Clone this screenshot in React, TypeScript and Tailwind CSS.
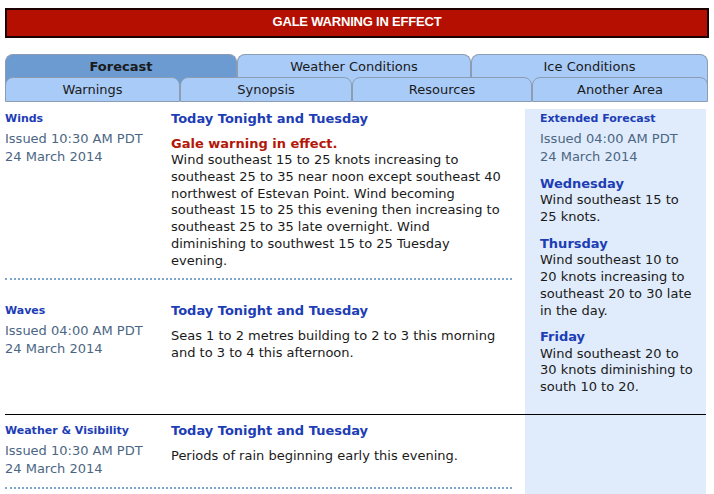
import React from "react";

const tabBorder = "border border-[#8c9db3]";

function IssuedBlock({ label, issued }: { label: string; issued: string }) {
  return (
    <div className="w-[166px] shrink-0">
      <div className="text-[11px] font-bold leading-[14px] text-[#1d3db5]">{label}</div>
      <div className="mt-[4px] text-[13px] leading-[18px] text-[#4b6684]">
        {issued}
        <br />
        24 March 2014
      </div>
    </div>
  );
}

function Heading() {
  return (
    <div className="text-[13px] font-bold leading-[14px] text-[#1d3db5] whitespace-nowrap">
      Today Tonight and Tuesday
    </div>
  );
}

export default function App() {
  return (
    <div className="w-[714px] h-[494px] overflow-hidden bg-white px-[5px] font-['DejaVu_Sans',Verdana,sans-serif]">
      {/* Banner */}
      <div className="mt-[8px] h-[30px] w-[704px] border-2 border-[#1a0000] bg-[#b40f00] flex items-center justify-center pb-[3px]">
        <span className="font-['Liberation_Sans',Arial,sans-serif] text-[13px] font-bold tracking-[-0.2px] text-white">
          GALE WARNING IN EFFECT
        </span>
      </div>

      {/* Tabs */}
      <div className="mt-[16px] w-[703px]">
        <div className="flex">
          <div className={`w-[232px] h-[31px] pt-[2px] pb-[8px] rounded-t-[8px] ${tabBorder} border-b-0 bg-[#6b9bd0] flex items-center justify-center text-[13px] font-bold text-[#1a1a1a]`}>
            Forecast
          </div>
          <div className={`w-[234px] h-[31px] pt-[2px] pb-[8px] rounded-t-[8px] ${tabBorder} border-b-0 bg-[#a9cbf8] flex items-center justify-center text-[13px] text-[#1a1a1a]`}>
            Weather Conditions
          </div>
          <div className={`w-[237px] h-[31px] pt-[2px] pb-[8px] rounded-t-[8px] ${tabBorder} border-b-0 bg-[#a9cbf8] flex items-center justify-center text-[13px] text-[#1a1a1a]`}>
            Ice Conditions
          </div>
        </div>
        <div className="relative -mt-[8px] flex">
          <div className={`w-[175px] h-[25px] pt-[1px] rounded-t-[8px] ${tabBorder} bg-[#a9cbf8] flex items-center justify-center text-[13px] text-[#1a1a1a]`}>
            Warnings
          </div>
          <div className={`w-[172px] h-[25px] pt-[1px] rounded-t-[8px] ${tabBorder} bg-[#a9cbf8] flex items-center justify-center text-[13px] text-[#1a1a1a]`}>
            Synopsis
          </div>
          <div className={`w-[180px] h-[25px] pt-[1px] rounded-t-[8px] ${tabBorder} bg-[#a9cbf8] flex items-center justify-center text-[13px] text-[#1a1a1a]`}>
            Resources
          </div>
          <div className={`w-[176px] h-[25px] pt-[1px] rounded-t-[8px] ${tabBorder} bg-[#a9cbf8] flex items-center justify-center text-[13px] text-[#1a1a1a]`}>
            Another Area
          </div>
        </div>
      </div>

      {/* Row A */}
      <div className="w-[701px] pt-[7px] flex">
        <div className="w-[507px] shrink-0">
          {/* Winds */}
          <div className="flex items-start pt-[3px] pb-[9px] border-b-2 border-dotted border-[#7fa5cf]">
            <IssuedBlock label="Winds" issued="Issued 10:30 AM PDT" />
            <div className="w-[341px]">
              <Heading />
              <div className="mt-[9.6px] text-[13px] leading-[16.7px] text-[#1a1a1a] whitespace-nowrap">
                <div className="font-bold text-[#b3170a]">Gale warning in effect.</div>
                Wind southeast 15 to 25 knots increasing to
                <br />
                southeast 25 to 35 near noon except southeast 40
                <br />
                northwest of Estevan Point. Wind becoming
                <br />
                southeast 15 to 25 this evening then increasing to
                <br />
                southeast 25 to 35 late overnight. Wind
                <br />
                diminishing to southwest 15 to 25 Tuesday
                <br />
                evening.
              </div>
            </div>
          </div>
          {/* Waves */}
          <div className="flex items-start pt-[24px] pb-[10px]">
            <IssuedBlock label="Waves" issued="Issued 04:00 AM PDT" />
            <div className="w-[341px]">
              <Heading />
              <div className="mt-[9.6px] text-[13px] leading-[16.7px] text-[#1a1a1a] whitespace-nowrap">
                Seas 1 to 2 metres building to 2 to 3 this morning
                <br />
                and to 3 to 4 this afternoon.
              </div>
            </div>
          </div>
        </div>

        {/* Sidebar */}
        <div className="ml-[13px] w-[181px] shrink-0 bg-[#e0ecfb] pl-[15px] pt-[3px] pb-[18.6px]">
          <div className="text-[11px] font-bold leading-[14px] text-[#1d3db5]">Extended Forecast</div>
          <div className="mt-[4px] text-[13px] leading-[18px] text-[#4b6684]">
            Issued 04:00 AM PDT
            <br />
            24 March 2014
          </div>
          <div className="mt-[9.6px] text-[13px] leading-[16.7px] whitespace-nowrap">
            <div className="font-bold text-[#1d3db5]">Wednesday</div>
            <div className="text-[#1a1a1a]">
              Wind southeast 15 to
              <br />
              25 knots.
            </div>
            <div className="mt-[10px] font-bold text-[#1d3db5]">Thursday</div>
            <div className="text-[#1a1a1a]">
              Wind southeast 10 to
              <br />
              20 knots increasing to
              <br />
              southeast 20 to 30 late
              <br />
              in the day.
            </div>
            <div className="mt-[9.6px] font-bold text-[#1d3db5]">Friday</div>
            <div className="text-[#1a1a1a]">
              Wind southeast 20 to
              <br />
              30 knots diminishing to
              <br />
              south 10 to 20.
            </div>
          </div>
        </div>
      </div>

      {/* Row B */}
      <div className="w-[701px] flex border-t border-black min-h-[120px]">
        <div className="w-[507px] shrink-0">
          <div className="flex items-start pt-[9px] pb-[9px] border-b-2 border-dotted border-[#7fa5cf]">
            <IssuedBlock label="Weather & Visibility" issued="Issued 10:30 AM PDT" />
            <div className="w-[341px]">
              <Heading />
              <div className="mt-[9.6px] text-[13px] leading-[16.7px] text-[#1a1a1a] whitespace-nowrap">
                Periods of rain beginning early this evening.
              </div>
            </div>
          </div>
        </div>
        <div className="ml-[13px] w-[181px] shrink-0 bg-[#e0ecfb]" />
      </div>
    </div>
  );
}
